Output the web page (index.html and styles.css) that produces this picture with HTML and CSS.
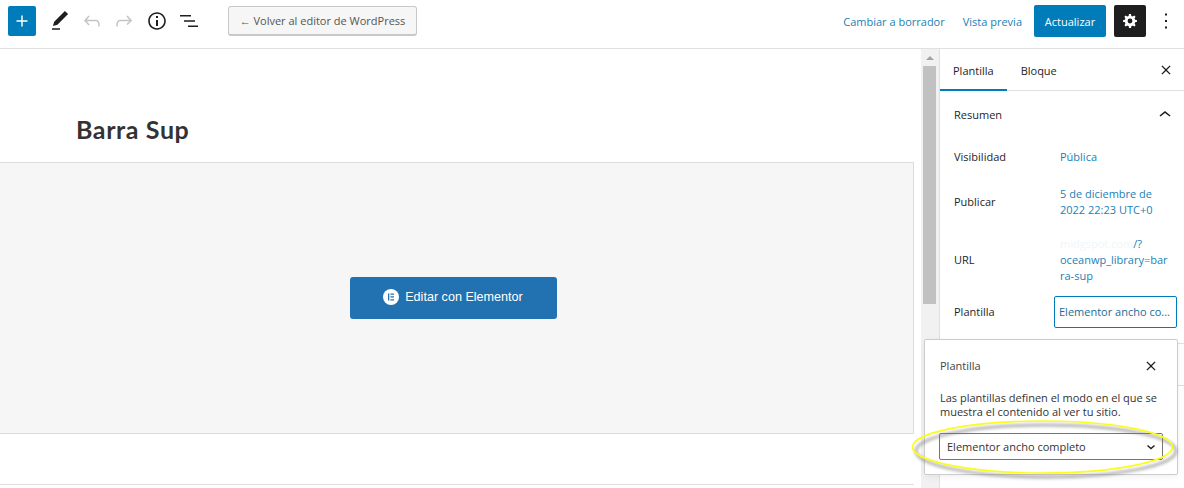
FILE: index.html
```html
<!DOCTYPE html>
<html lang="es">
<head>
<meta charset="utf-8">
<title>Barra Sup</title>
<link rel="stylesheet" href="styles.css">
</head>
<body>
<header class="topbar">
  <div class="tools">
    <button class="add"><svg width="22" height="22" viewBox="0 0 24 24"><path d="M18 11.2h-5.2V6h-1.6v5.2H6v1.6h5.2V18h1.6v-5.2H18z" fill="#fff"/></svg></button>
    <svg class="tool first" width="24" height="24" viewBox="0 0 24 24"><path d="M20.1 5.1L16.9 2 6.2 12.7l-1.3 4.4 4.5-1.3L20.1 5.1zM4 20.8h8v-1.5H4v1.5z" fill="#1e1e1e"/></svg>
    <svg class="tool" width="24" height="24" viewBox="0 0 24 24"><path d="M18.3 11.7c-.6-.6-1.4-.9-2.3-.9H6.7l2.9-3.3-1.1-1L4 11.5l4.5 5.1 1.1-1-2.9-3.3H16c.5 0 .9.2 1.3.5 1 1 1 3.4 1 4.5v.3h1.5v-.2c0-1.5 0-4.3-1.5-5.7z" fill="#c4c4c4"/></svg>
    <svg class="tool" width="24" height="24" viewBox="0 0 24 24"><path d="M15.6 6.5l-1.1 1 2.9 3.3H8c-.9 0-1.7.3-2.3.9-1.4 1.5-1.4 4.2-1.4 5.6v.2h1.5v-.3c0-1.1 0-3.5 1-4.5.3-.3.7-.5 1.3-.5h9.2L14.5 15l1.1 1.1 4.6-4.6-4.6-5z" fill="#c4c4c4"/></svg>
    <svg class="tool info" width="24" height="24" viewBox="0 0 24 24"><path d="M12 3.2c-4.8 0-8.8 3.9-8.8 8.8 0 4.8 3.9 8.8 8.8 8.8 4.8 0 8.8-3.9 8.8-8.8 0-4.8-4-8.8-8.8-8.8zm0 16c-4 0-7.2-3.3-7.2-7.2C4.8 8 8 4.8 12 4.8s7.2 3.3 7.2 7.2c0 4-3.2 7.2-7.2 7.2zM11 17h2v-6h-2v6zm0-8h2V7h-2v2z" fill="#1e1e1e"/></svg>
    <svg class="tool" width="24" height="24" viewBox="0 0 24 24"><path d="M3 6h11v1.5H3zM7 11.25h11v1.5H7zM11 16.5h10V18H11z" fill="#1e1e1e"/></svg>
    <button class="back">← Volver al editor de WordPress</button>
  </div>
  <div class="actions">
    <a class="link draft">Cambiar a borrador</a>
    <a class="link preview">Vista previa</a>
    <button class="update">Actualizar</button>
    <button class="gear"><svg width="24" height="24" viewBox="0 0 24 24"><path d="M19 12.8v-1.6l-1.9-.4c-.1-.5-.3-1-.6-1.4l1-1.6-1.2-1.2-1.6 1c-.4-.3-.9-.5-1.4-.6L13 5h-2l-.4 2c-.5.1-1 .3-1.4.6l-1.6-1-1.2 1.2 1 1.6c-.3.4-.5.9-.6 1.4L5 11.2v1.6l1.9.4c.1.5.3 1 .6 1.4l-1 1.6 1.2 1.2 1.6-1c.4.3.9.5 1.4.6l.3 2h2l.4-2c.5-.1 1-.3 1.4-.6l1.6 1 1.2-1.2-1-1.6c.3-.4.5-.9.6-1.4l1.8-.4zM12 14.4a2.4 2.4 0 1 1 0-4.8 2.4 2.4 0 0 1 0 4.8z" fill="#fff"/></svg></button>
    <svg class="more" width="24" height="24" viewBox="0 0 24 24"><path d="M11 4.5h2v2h-2zM11 11h2v2h-2zM11 17.5h2v2h-2z" fill="#1e1e1e"/></svg>
  </div>
</header>
<div class="workspace">
  <main class="editor">
    <div class="canvas">
      <h1 class="title">Barra Sup</h1>
      <div class="placeholder">
        <button class="elementor">
          <svg width="16" height="16" viewBox="0 0 16 16"><circle cx="8" cy="8" r="8" fill="#fff"/><path d="M5 4.5h1.3v7H5zM7.4 4.5H11v1.3H7.4zM7.4 7.3H11v1.3H7.4zM7.4 10.2H11v1.3H7.4z" fill="#2271b1"/></svg>
          <span>Editar con Elementor</span>
        </button>
      </div>
      <div class="afterblock"></div>
    </div>
    <div class="scrollbar">
      <span class="arrow"></span>
      <span class="thumb"></span>
    </div>
  </main>
  <aside class="sidebar">
    <div class="tabs">
      <span class="tab active">Plantilla</span>
      <span class="tab">Bloque</span>
      <svg class="tabclose" width="20" height="20" viewBox="0 0 24 24"><path d="M12 10.9L7.6 6.5 6.5 7.6l4.4 4.4-4.4 4.4 1.1 1.1 4.4-4.4 4.4 4.4 1.1-1.1-4.4-4.4 4.4-4.4-1.1-1.1z" fill="#1e1e1e"/></svg>
    </div>
    <section class="summary">
      <div class="summary-head">
        <span>Resumen</span>
        <svg width="24" height="24" viewBox="0 0 24 24"><path d="M6.5 12.4L12 8l5.5 4.4-.9 1.2L12 10l-4.5 3.6z" fill="#1e1e1e"/></svg>
      </div>
      <div class="row r-vis"><span class="label">Visibilidad</span><a class="value">Pública</a></div>
      <div class="row r-pub"><span class="label">Publicar</span><a class="value">5 de diciembre de<br>2022 22:23 UTC+0</a></div>
      <div class="row r-url"><span class="label">URL</span><a class="value"><span class="blur">midgspot.com</span>/?<br>oceanwp_library=bar<br>ra-sup</a></div>
      <div class="row r-tpl"><span class="label">Plantilla</span><a class="tplbox">Elementor ancho co...</a></div>
    </section>
    <div class="divider d1"></div>
    <div class="divider d2"></div>
  </aside>
</div>
<div class="popover">
  <div class="pop-head">
    <span>Plantilla</span>
    <svg width="20" height="20" viewBox="0 0 24 24"><path d="M12 10.9L7.6 6.5 6.5 7.6l4.4 4.4-4.4 4.4 1.1 1.1 4.4-4.4 4.4 4.4 1.1-1.1-4.4-4.4 4.4-4.4-1.1-1.1z" fill="#1e1e1e"/></svg>
  </div>
  <p class="pop-text">Las plantillas definen el modo en el que se muestra el contenido al ver tu sitio.</p>
  <div class="select">
    <span>Elementor ancho completo</span>
    <svg width="12" height="12" viewBox="0 0 12 12"><path d="M2.5 4.5L6 7.5l3.5-3" fill="none" stroke="#1e1e1e" stroke-width="1.4"/></svg>
  </div>
</div>
<svg class="ellipse" width="284" height="76" viewBox="0 0 284 76">
  <ellipse class="ellipse-shadow" cx="146" cy="39" rx="130" ry="26" fill="none" stroke="#777" stroke-opacity=".55" stroke-width="3"/>
  <ellipse cx="142.5" cy="35" rx="130" ry="26" fill="none" stroke="#fbfb1e" stroke-width="1.6"/>
</svg>
</body>
</html>
```

FILE: styles.css
```css
* { box-sizing: border-box; }
html, body { margin: 0; height: 488px; overflow: hidden; }
body {
  position: relative;
  background: #fff;
  color: #1e1e1e;
  font-family: "Open Sans", "Noto Sans", "Liberation Sans", sans-serif;
  font-size: 11px;
}
button { font-family: inherit; cursor: pointer; }
.topbar {
  height: 49px;
  padding-bottom: 6px;
  border-bottom: 1px solid #e0e0e0;
  display: flex;
  justify-content: space-between;
  align-items: center;
}
.tools { display: flex; align-items: center; padding-left: 8px; }
.add {
  width: 28px; height: 30px;
  background: #007cba;
  border: 0; border-radius: 2px; padding: 0;
  display: flex; align-items: center; justify-content: center;
}
.tool { display: block; margin-left: 8px; }
.tool.first { margin-left: 12px; }
.tool.info { margin-left: 9px; }
.back {
  margin-left: 27px;
  width: 189px; height: 30px;
  background: #f6f6f6;
  border: 1px solid #c8c8c8;
  border-bottom-width: 2px;
  border-radius: 3px;
  color: #555;
  font-size: 11px;
  padding: 0;
}
.actions { display: flex; align-items: center; }
.link { color: #1a7fb5; font-size: 11px; white-space: nowrap; }
.preview { margin-left: 18px; }
.update {
  margin-left: 12px;
  width: 72px; height: 32px;
  background: #007cba;
  color: #fff;
  border: 0; border-radius: 2px;
  font-size: 11px; font-weight: 500;
  padding: 0;
}
.gear {
  margin-left: 8px;
  width: 32px; height: 32px;
  background: #1e1e1e;
  border: 0; border-radius: 2px; padding: 0;
  display: flex; align-items: center; justify-content: center;
}
.more { margin-left: 8px; margin-right: 6px; }
.workspace { display: flex; height: 439px; }
.editor { width: 939px; display: flex; }
.canvas { flex: 1; min-width: 0; padding-right: 7px; }
.title {
  margin: 0;
  padding: 66px 0 0 76px;
  height: 113px;
  font-family: "Lato", "Open Sans", sans-serif;
  font-size: 25px;
  line-height: 28px;
  letter-spacing: .6px;
  font-weight: 700;
  color: #333;
}
.placeholder {
  height: 272px;
  background: #f6f6f6;
  border: 1px solid #dcdcdc;
  border-left: 0;
  display: flex;
  align-items: center;
  justify-content: center;
}
.elementor {
  width: 207px; height: 42px;
  margin-right: 7px;
  background: #2271b1;
  color: #fff;
  border: 0; border-radius: 3px;
  font-family: "Liberation Sans", sans-serif;
  font-size: 12.6px;
  display: flex; align-items: center; justify-content: center; gap: 6px;
  padding: 0 0 3px;
}
.afterblock { height: 51px; border-bottom: 1px solid #e0e0e0; }
.scrollbar {
  width: 18px;
  background: #f1f1f1;
  display: flex;
  flex-direction: column;
  align-items: center;
  padding: 7px 1px 0 0;
}
.arrow {
  width: 0; height: 0;
  border-left: 4px solid transparent;
  border-right: 4px solid transparent;
  border-bottom: 4px solid #a3a3a3;
}
.thumb { width: 13px; height: 238px; margin-top: 6px; background: #c1c1c1; }
.sidebar { position: relative; width: 245px; border-left: 1px solid #e0e0e0; }
.tabs {
  height: 42px;
  border-bottom: 1px solid #e0e0e0;
  display: flex;
  align-items: stretch;
  font-size: 11px;
  font-weight: 500;
}
.tab { display: flex; align-items: center; padding: 0 13px; margin-bottom: -1px; color: #1e1e1e; }
.tab.active { border-bottom: 2px solid #007cba; padding-top: 2px; }
.tab + .tab { padding-left: 14px; padding-top: 0; }
.tabclose { margin-left: auto; margin-right: 8px; align-self: center; }
.summary { padding: 0 7px 0 14px; }
.summary-head {
  height: 47px;
  display: flex;
  align-items: center;
  justify-content: space-between;
  font-weight: 500;
}
.row { display: flex; align-items: center; line-height: 16px; }
.label { width: 106px; flex: none; }
.value { color: #1a7fb5; font-size: 11px; }
.r-vis { height: 37px; }
.r-pub { height: 53px; }
.r-url { height: 64px; }
.r-tpl { height: 32px; margin-top: 4px; }
.r-tpl .label { width: 100px; }
.blur { color: #f0f6fa; }
.tplbox {
  display: block;
  width: 123px; height: 32px;
  border: 1px solid #007cba;
  border-radius: 2px;
  padding: 0 4px;
  line-height: 30px;
  color: #1a6c96;
  white-space: nowrap;
}
.divider { position: absolute; right: 0; width: 20px; height: 1px; background: #e0e0e0; }
.d1 { top: 294px; }
.d2 { top: 336px; }
.popover {
  position: absolute;
  left: 924px; top: 339px;
  width: 254px; height: 136px;
  background: #fff;
  border: 1px solid #ccc;
  border-radius: 2px;
  box-shadow: 0 2px 6px rgba(0,0,0,.06);
  padding: 0 14px;
}
.pop-head {
  height: 51px;
  padding-left: 1px;
  display: flex;
  align-items: center;
  justify-content: space-between;
  font-weight: 500;
  color: #444;
  margin-right: 2px;
}
.pop-text { margin: 0; padding-left: 1px; line-height: 14px; font-size: 11px; color: #333; }
.select {
  margin-top: 14px;
  width: 224px; height: 27px;
  border: 1px solid #757575;
  border-radius: 2px;
  display: flex;
  align-items: center;
  justify-content: space-between;
  padding: 0 5px 0 7px;
  color: #333;
}
.ellipse { position: absolute; left: 900px; top: 412px; pointer-events: none; }
.ellipse-shadow { filter: blur(1.5px); }
```
